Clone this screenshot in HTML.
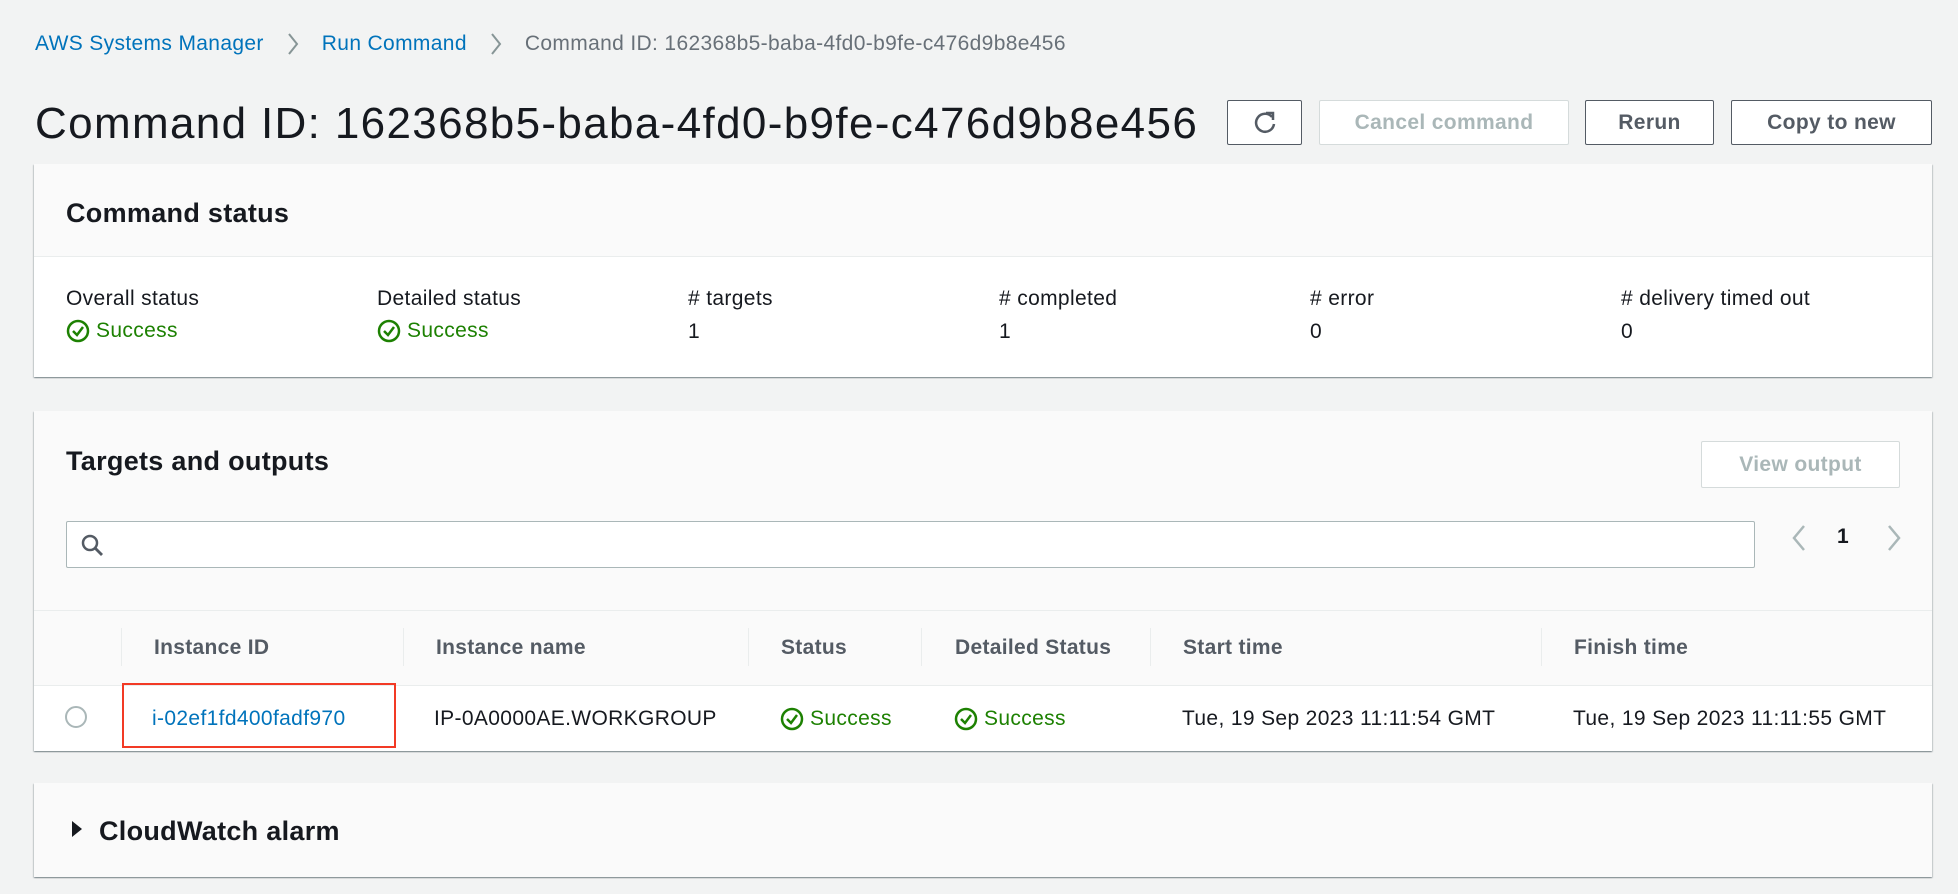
<!DOCTYPE html>
<html><head><meta charset="utf-8"><style>
*{box-sizing:border-box;margin:0;padding:0}
body{width:1958px;height:894px;background:#f2f3f3;font-family:"Liberation Sans",sans-serif;color:#16191f;position:relative;overflow:hidden;font-size:21px;letter-spacing:0.35px}
.a{position:absolute;white-space:nowrap}
.link{color:#0073bb}
.btn{position:absolute;border:1px solid #545b64;border-radius:2px;background:#fff;color:#545b64;font-weight:bold;font-size:21px;display:flex;align-items:center;justify-content:center;padding-top:1px}
.dis{border-color:#d5dbdb;color:#aab7b8}
.panel{position:absolute;left:34px;width:1898px;background:#fff;box-shadow:0 1px 1px 0 rgba(0,28,36,.3),1px 1px 1px 0 rgba(0,28,36,.15),-1px 1px 1px 0 rgba(0,28,36,.15)}
.hd{background:#fafafa}
.h2{font-weight:bold;font-size:27px;letter-spacing:0.3px}
.ok{color:#1d8102;display:flex;align-items:center;gap:6px}
.th{font-weight:bold;color:#545b64;letter-spacing:0.3px}
.sep{position:absolute;width:1px;background:#eaeded;top:18px;height:38px}
.bc{position:absolute;left:35px;top:32px;display:flex;align-items:center;white-space:nowrap}
</style></head><body>
<div class="bc"><span class="link">AWS Systems Manager</span>
<svg style="margin:0 22px" width="14" height="24"><path d="M3 2 L11 12 L3 22" fill="none" stroke="#879596" stroke-width="2"/></svg>
<span class="link">Run Command</span>
<svg style="margin:0 22px" width="14" height="24"><path d="M3 2 L11 12 L3 22" fill="none" stroke="#879596" stroke-width="2"/></svg>
<span style="color:#687078">Command ID: 162368b5-baba-4fd0-b9fe-c476d9b8e456</span></div>
<div class="a" style="left:35px;top:99px;font-size:44px;letter-spacing:1.35px">Command ID: 162368b5-baba-4fd0-b9fe-c476d9b8e456</div>
<div class="btn" style="left:1227px;top:100px;width:75px;height:45px"><svg width="26" height="26" viewBox="0 0 26 26"><path d="M20 7 A9 9 0 1 0 22 14" fill="none" stroke="#545b64" stroke-width="2.5"/><path d="M14 3 L21 3 L21 10" fill="none" stroke="#545b64" stroke-width="2.5"/></svg></div>
<div class="btn dis" style="left:1319px;top:100px;width:250px;height:45px">Cancel command</div>
<div class="btn" style="left:1585px;top:100px;width:129px;height:45px">Rerun</div>
<div class="btn" style="left:1731px;top:100px;width:201px;height:45px">Copy to new</div>

<div class="panel" style="top:164px;height:213px">
<div class="hd" style="height:93px;border-bottom:1px solid #eaeded"></div>
<div class="a h2" style="left:32px;top:34px">Command status</div>
<div class="a" style="left:32px;top:123px">Overall status</div>
<div class="a ok" style="left:32px;top:155px"><svg width="24" height="24"><circle cx="12" cy="12" r="10" fill="none" stroke="#1d8102" stroke-width="2.5"/><path d="M7 12 L11 16 L17 8" fill="none" stroke="#1d8102" stroke-width="2.5"/></svg>Success</div>
<div class="a" style="left:343px;top:123px">Detailed status</div>
<div class="a ok" style="left:343px;top:155px"><svg width="24" height="24"><circle cx="12" cy="12" r="10" fill="none" stroke="#1d8102" stroke-width="2.5"/><path d="M7 12 L11 16 L17 8" fill="none" stroke="#1d8102" stroke-width="2.5"/></svg>Success</div>
<div class="a" style="left:654px;top:123px"># targets</div><div class="a" style="left:654px;top:156px">1</div>
<div class="a" style="left:965px;top:123px"># completed</div><div class="a" style="left:965px;top:156px">1</div>
<div class="a" style="left:1276px;top:123px"># error</div><div class="a" style="left:1276px;top:156px">0</div>
<div class="a" style="left:1587px;top:123px"># delivery timed out</div><div class="a" style="left:1587px;top:156px">0</div>
</div>

<div class="panel" style="top:411px;height:340px">
<div class="hd" style="height:275px;border-bottom:1px solid #eaeded"></div>
<div class="a h2" style="left:32px;top:35px">Targets and outputs</div>
<div class="btn dis" style="left:1667px;top:30px;width:199px;height:47px">View output</div>
<div class="a" style="left:32px;top:110px;width:1689px;height:47px;border:1px solid #aab7b8;border-radius:2px;background:#fff"></div>
<svg class="a" style="left:46px;top:122px" width="26" height="26"><circle cx="10" cy="10" r="7" fill="none" stroke="#545b64" stroke-width="2.5"/><path d="M15 15 L22 22" stroke="#545b64" stroke-width="2.8"/></svg>
<svg class="a" style="left:1755px;top:112px" width="20" height="30"><path d="M15 3 L5 15 L15 27" fill="none" stroke="#aab7b8" stroke-width="2.5"/></svg>
<div class="a" style="left:1803px;top:114px;font-weight:bold">1</div>
<svg class="a" style="left:1850px;top:112px" width="20" height="30"><path d="M5 3 L15 15 L5 27" fill="none" stroke="#aab7b8" stroke-width="2.5"/></svg>
<div class="a" style="left:0;top:199px;width:1898px;height:1px;background:#eaeded"></div>
<div style="position:absolute;left:0;top:199px;width:1898px;height:76px">
<div class="sep" style="left:87px"></div><div class="sep" style="left:369px"></div><div class="sep" style="left:714px"></div><div class="sep" style="left:887px"></div><div class="sep" style="left:1116px"></div><div class="sep" style="left:1507px"></div>
</div>
<div class="a th" style="left:120px;top:225px">Instance ID</div>
<div class="a th" style="left:402px;top:225px">Instance name</div>
<div class="a th" style="left:747px;top:225px">Status</div>
<div class="a th" style="left:921px;top:225px">Detailed Status</div>
<div class="a th" style="left:1149px;top:225px">Start time</div>
<div class="a th" style="left:1540px;top:225px">Finish time</div>
<div class="a" style="left:31px;top:295px;width:22px;height:22px;border:2px solid #aab7b8;border-radius:50%"></div>
<div class="a" style="left:88px;top:272px;width:274px;height:65px;border:2px solid #f23a25"></div>
<div class="a link" style="left:118px;top:296px">i-02ef1fd400fadf970</div>
<div class="a" style="left:400px;top:296px">IP-0A0000AE.WORKGROUP</div>
<div class="a ok" style="left:746px;top:296px"><svg width="24" height="24"><circle cx="12" cy="12" r="10" fill="none" stroke="#1d8102" stroke-width="2.5"/><path d="M7 12 L11 16 L17 8" fill="none" stroke="#1d8102" stroke-width="2.5"/></svg>Success</div>
<div class="a ok" style="left:920px;top:296px"><svg width="24" height="24"><circle cx="12" cy="12" r="10" fill="none" stroke="#1d8102" stroke-width="2.5"/><path d="M7 12 L11 16 L17 8" fill="none" stroke="#1d8102" stroke-width="2.5"/></svg>Success</div>
<div class="a" style="left:1148px;top:296px">Tue, 19 Sep 2023 11:11:54 GMT</div>
<div class="a" style="left:1539px;top:296px">Tue, 19 Sep 2023 11:11:55 GMT</div>
</div>

<div class="panel hd" style="top:783px;height:94px">
<svg class="a" style="left:36px;top:36px" width="14" height="20"><path d="M2 2 L12 10 L2 18 Z" fill="#16191f"/></svg>
<div class="a h2" style="left:65px;top:33px">CloudWatch alarm</div>
</div>
</body></html>
